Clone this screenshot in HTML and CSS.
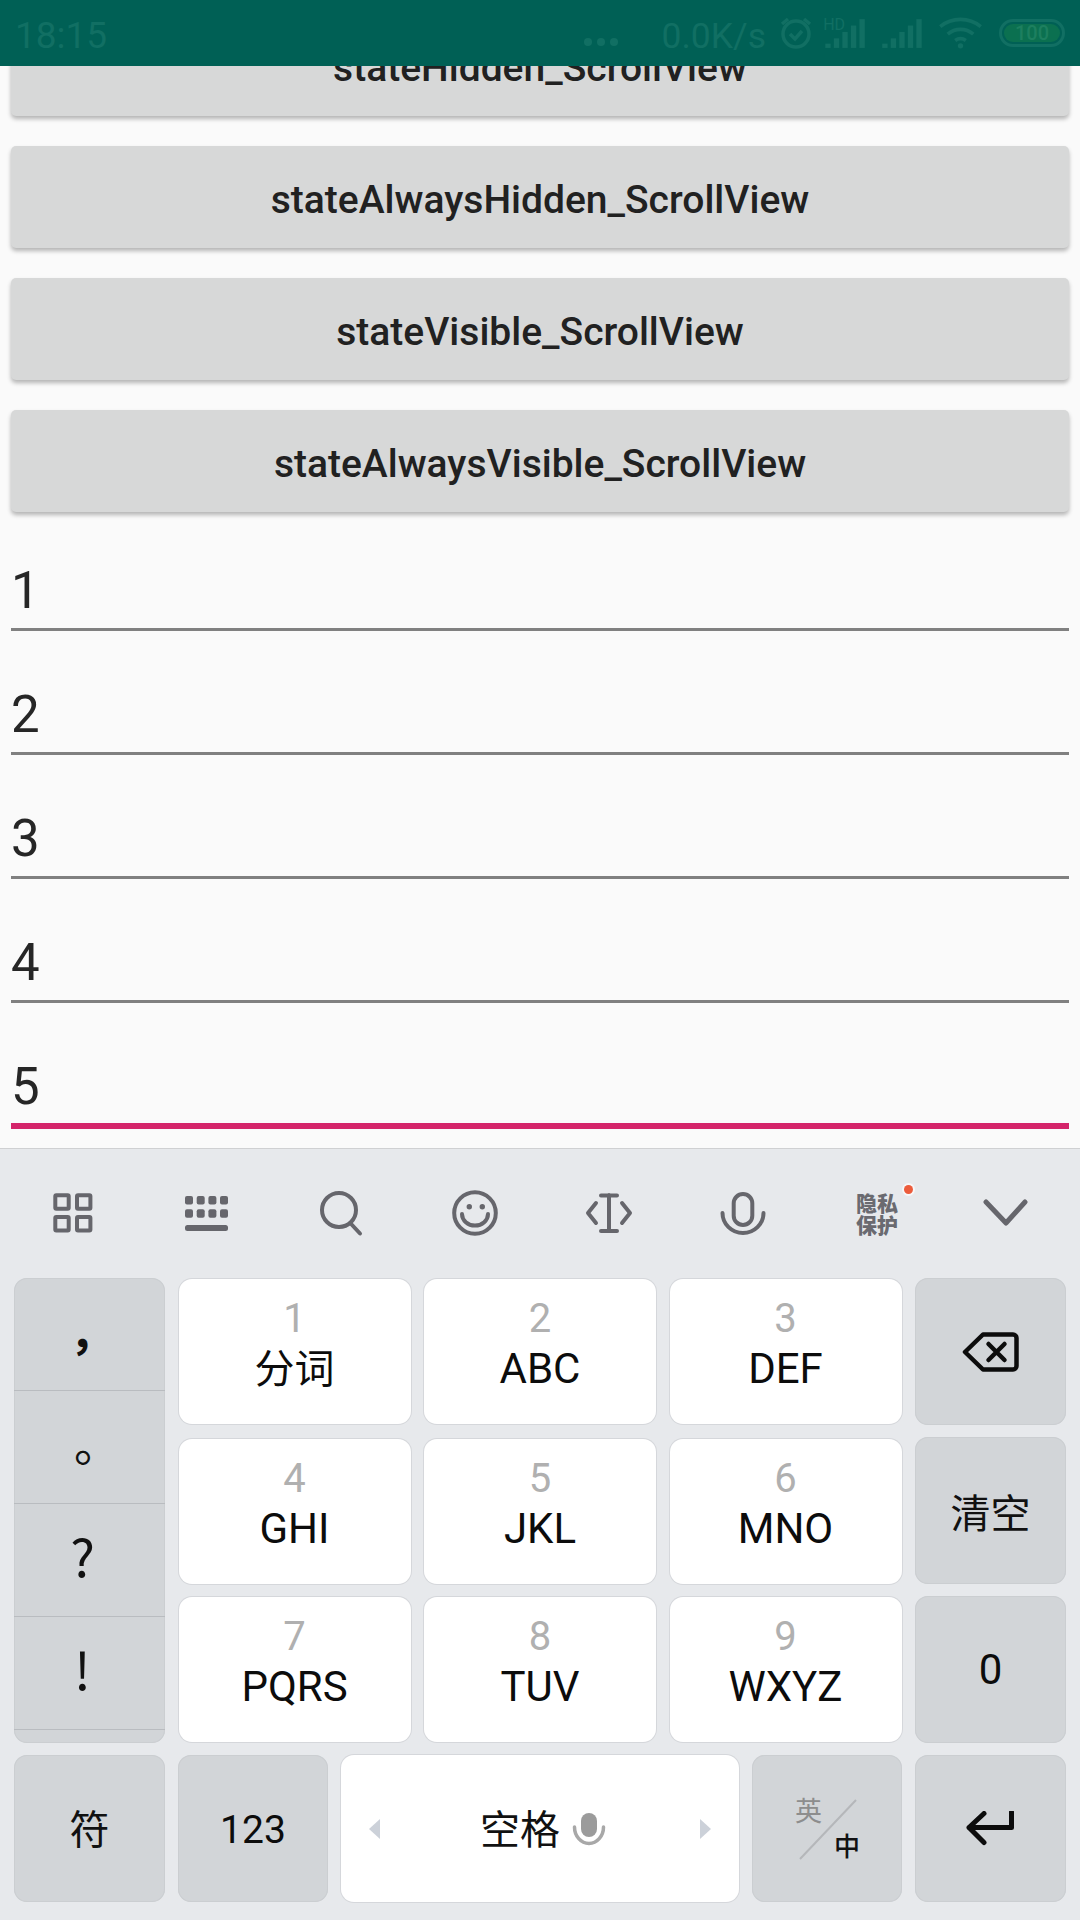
FILE: index.html
```html
<!DOCTYPE html>
<html lang="zh">
<head>
<meta charset="utf-8">
<title>Soft input demo</title>
<link rel="stylesheet" href="styles.css">
</head>
<body>
<div class="screen">
  <div class="statusbar">
    <span class="time">18:15</span>
    <div class="status-right">
      <svg class="st-dots" width="36" height="10" viewBox="0 0 36 10"><circle cx="5" cy="5" r="4"/><circle cx="18" cy="5" r="4"/><circle cx="31" cy="5" r="4"/></svg>
      <span class="speed">0.0K/s</span>
      <svg class="st-stroke st-alarm" width="34" height="34" viewBox="0 0 34 34"><circle cx="17" cy="18" r="13"/><path d="M11 18l5 5 7-8M3 8l6-5M31 8l-6-5"/></svg>
      <svg class="st-fill" width="43" height="32" viewBox="0 0 40 30"><text x="0" y="12" class="st-hd">HD</text><rect x="2" y="25" width="5" height="4"/><rect x="10" y="20" width="5" height="9"/><rect x="18" y="14" width="5" height="15"/><rect x="26" y="8" width="5" height="21"/><rect x="34" y="2" width="5" height="27"/></svg>
      <svg class="st-fill" width="43" height="32" viewBox="0 0 40 30"><rect x="1" y="25" width="5" height="4"/><rect x="9" y="20" width="5" height="9"/><rect x="17" y="14" width="5" height="15"/><rect x="25" y="8" width="5" height="21"/><rect x="33" y="2" width="5" height="27"/></svg>
      <svg class="st-stroke" width="43" height="32" viewBox="0 0 40 30"><path d="M1 9c11-9 27-9 38 0M8 16c7-6 17-6 24 0M15 22c3-2 7-2 10 0"/><circle cx="20" cy="27" r="2.5" class="st-dotfill"/></svg>
      <div class="battery"><span class="battery-level">100</span></div>
    </div>
  </div>

  <main class="content">
    <div class="buttons">
      <button class="btn">stateHidden_ScrollView</button>
      <button class="btn">stateAlwaysHidden_ScrollView</button>
      <button class="btn">stateVisible_ScrollView</button>
      <button class="btn">stateAlwaysVisible_ScrollView</button>
    </div>
    <div class="fields">
      <div class="field">1</div>
      <div class="field">2</div>
      <div class="field">3</div>
      <div class="field">4</div>
      <div class="field field-active">5</div>
    </div>
  </main>

  <section class="keyboard">
    <div class="toolbar">
      <div class="tool"><svg class="ico" width="60" height="60" viewBox="0 0 60 60"><rect x="12.3" y="12.3" width="13.4" height="13.4" rx="1"/><rect x="34" y="12.3" width="13.4" height="13.4" rx="1"/><rect x="12.3" y="34" width="13.4" height="13.4" rx="1"/><rect x="34" y="34" width="13.4" height="13.4" rx="1"/></svg></div>
      <div class="tool"><svg class="ico-fill" width="60" height="60" viewBox="0 0 60 60"><rect x="8" y="13" width="8" height="8.5" rx="2"/><rect x="19.7" y="13" width="8" height="8.5" rx="2"/><rect x="31.4" y="13" width="8" height="8.5" rx="2"/><rect x="43" y="13" width="8" height="8.5" rx="2"/><rect x="8" y="26.3" width="8" height="8.5" rx="2"/><rect x="19.7" y="26.3" width="8" height="8.5" rx="2"/><rect x="31.4" y="26.3" width="8" height="8.5" rx="2"/><rect x="43" y="26.3" width="8" height="8.5" rx="2"/><rect x="8" y="42" width="43" height="6" rx="2.5"/></svg></div>
      <div class="tool"><svg class="ico" width="60" height="60" viewBox="0 0 60 60"><circle cx="28" cy="27" r="17"/><path d="M39.7 40.5L49 50.5"/></svg></div>
      <div class="tool"><svg class="ico" width="60" height="60" viewBox="0 0 60 60"><circle cx="30" cy="30" r="20.8"/><path d="M17 31a13 11.5 0 0 0 26 0"/><circle class="ico-dot" cx="24.3" cy="23.7" r="2.7"/><circle class="ico-dot" cx="37.3" cy="23.7" r="2.7"/></svg></div>
      <div class="tool"><svg class="ico" width="60" height="60" viewBox="0 0 60 60"><path d="M30 12v36M22 12.5h16M22 48h16"/><path d="M17 20l-8 10 8 10M43 20l8 10-8 10"/></svg></div>
      <div class="tool"><svg class="ico" width="60" height="60" viewBox="0 0 60 60"><rect x="20.7" y="11" width="18.6" height="31" rx="9.3"/><path d="M9.5 30a20.5 20 0 0 0 41 0"/></svg></div>
      <div class="tool"><span class="privacy">隐私<br>保护</span><span class="badge"></span></div>
      <div class="tool"><svg class="ico ico-chev" width="60" height="60" viewBox="0 0 60 60"><path d="M5 19l20 21 19-21"/></svg></div>
    </div>

    <div class="keypad">
      <div class="punct">
        <div class="slot"><span class="p-comma">，</span></div>
        <div class="slot"><span class="p-stop">。</span></div>
        <div class="slot"><span class="p-big">?</span></div>
        <div class="slot"><span class="p-big">!</span></div>
      </div>

      <div class="key white"><span class="num">1</span><span class="lab cjk">分词</span></div>
      <div class="key white"><span class="num">2</span><span class="lab">ABC</span></div>
      <div class="key white"><span class="num">3</span><span class="lab">DEF</span></div>
      <div class="key gray center">
        <svg class="ink ink-back" width="60" height="44" viewBox="0 0 60 44"><path d="M4 22L22 4.500h30a3.500 3.500 0 0 1 3.500 3.500v28a3.500 3.500 0 0 1-3.500 3.500H22z"/><path d="M27.500 14l16 16M43.500 14l-16 16"/></svg>
      </div>

      <div class="key white r2"><span class="num">4</span><span class="lab">GHI</span></div>
      <div class="key white r2"><span class="num">5</span><span class="lab">JKL</span></div>
      <div class="key white r2"><span class="num">6</span><span class="lab">MNO</span></div>
      <div class="key gray center cjk-big">清空</div>

      <div class="key white"><span class="num">7</span><span class="lab">PQRS</span></div>
      <div class="key white"><span class="num">8</span><span class="lab">TUV</span></div>
      <div class="key white"><span class="num">9</span><span class="lab">WXYZ</span></div>
      <div class="key gray center latin-big">0</div>

      <div class="bottom-row">
        <div class="key gray center cjk-big raise w151">符</div>
        <div class="key gray center latin-mid w150">123</div>
        <div class="key white space">
          <span class="tri tri-l"></span>
          <span class="space-mid">
            <span class="cjk-big raise">空格</span>
            <svg class="mic-mini" width="34" height="34" viewBox="0 0 34 34"><rect class="mic-cap" x="9" y="1" width="16" height="24" rx="8"/><path d="M2.500 15a14.500 16.500 0 0 0 29 0"/></svg>
          </span>
          <span class="tri tri-r"></span>
        </div>
        <div class="key gray lang w150">
          <span class="lang-en">英</span><span></span>
          <span></span><span class="lang-zh">中</span>
          <svg class="lang-slash" width="60" height="62" viewBox="0 0 60 62"><path d="M58 1L2 60"/></svg>
        </div>
        <div class="key gray center w151">
          <svg class="ink" width="52" height="36" viewBox="0 0 52 36"><path d="M46.500 1v15.500H4M19 2.500L4 16.500l15 15"/></svg>
        </div>
      </div>
    </div>
  </section>
</div>
</body>
</html>
```

FILE: styles.css
```css
* { box-sizing: border-box; }

html, body {
  margin: 0;
  padding: 0;
  background: #fafafa;
}

body {
  font-family: Roboto, "Noto Sans CJK SC", sans-serif;
}

.screen {
  position: relative;
  width: 1080px;
  height: 1920px;
  overflow: hidden;
  display: flex;
  flex-direction: column;
  background: #fafafa;
}

/* status bar lies over the scrolled content */
.statusbar {
  position: absolute;
  top: 0;
  left: 0;
  width: 1080px;
  height: 66px;
  background: #006055;
  display: flex;
  align-items: center;
  justify-content: space-between;
  padding: 0 15px;
  z-index: 2;
}

.time {
  font-size: 37px;
  line-height: 44px;
  padding-top: 5px;
  color: #116f63;
}

.status-right {
  display: flex;
  align-items: center;
}

.status-right svg { flex: none; }

.speed {
  font-size: 35.5px;
  line-height: 40px;
  padding-top: 5px;
  color: #116f63;
  margin: 0 13px 0 42px;
}

.st-dots { fill: #116f63; margin-top: 18px; }
.st-stroke { fill: none; stroke: #116f63; stroke-width: 3.500; margin-right: 15px; }
.st-stroke circle.st-dotfill { fill: #116f63; stroke: none; }
.st-alarm { margin-right: 10px; }
.st-fill { fill: #116f63; margin-right: 15px; }
.st-hd { font-family: Roboto, sans-serif; font-size: 15px; }

.battery {
  width: 66px;
  height: 28px;
  border: 3px solid #116f63;
  border-radius: 14px;
  display: flex;
  align-items: center;
  padding: 2px;
  margin-left: 2px;
}

.battery-level {
  flex: 1;
  height: 18px;
  border-radius: 9px;
  background: #0b7050;
  color: #1d7f5f;
  font-size: 20px;
  line-height: 18px;
  text-align: center;
  font-weight: 500;
}

/* app content */
.content {
  height: 1148px;
  flex: none;
  padding: 14px 11px 0;
  background: #fafafa;
}

.buttons {
  display: flex;
  flex-direction: column;
  gap: 30px;
}

.btn {
  display: block;
  width: 100%;
  height: 102px;
  padding: 6px 0 0;
  border: 0;
  border-radius: 5px;
  background: #d7d8d8;
  box-shadow: 0 3px 4px rgba(0, 0, 0, 0.28);
  color: #212121;
  font-family: Roboto, sans-serif;
  font-weight: 500;
  font-size: 39px;
  line-height: 96px;
  text-align: center;
}

.fields {
  display: flex;
  flex-direction: column;
  gap: 30px;
  margin-top: 25px;
}

.field {
  height: 94px;
  display: flex;
  align-items: flex-end;
  padding-bottom: 7px;
  border-bottom: 3px solid #808080;
  color: #262626;
  font-size: 51px;
  line-height: 60px;
}

.field-active {
  height: 96px;
  padding-bottom: 6px;
  border-bottom: 6px solid #d4246a;
}

/* keyboard */
.keyboard {
  flex: 1;
  background: #e7e9ec;
  border-top: 1px solid #cfd0d2;
}

.toolbar {
  display: flex;
  height: 128px;
  padding-left: 6px;
}

.tool {
  width: 134px;
  flex: none;
  display: flex;
  align-items: center;
  justify-content: center;
  position: relative;
}

.ico {
  fill: none;
  stroke: #66666c;
  stroke-width: 4;
  stroke-linecap: round;
  stroke-linejoin: round;
}

.ico-chev { stroke-width: 5; }
.ico .ico-dot { fill: #66666c; stroke: none; }
.ico-fill { fill: #66666c; }

.privacy {
  font-family: "Noto Sans CJK SC", sans-serif;
  font-weight: 900;
  font-size: 21px;
  line-height: 22px;
  color: #6a6a70;
  display: block;
}

.badge {
  position: absolute;
  left: 94px;
  top: 36px;
  width: 9px;
  height: 9px;
  border-radius: 50%;
  background: #ec5c3c;
  box-shadow: 0 0 0 2px #f7f7f8;
}

.keypad {
  margin-top: 1px;
  padding-left: 14px;
  display: grid;
  grid-template-columns: 151px 232px 232px 232px 151px;
  grid-template-rows: repeat(4, 147px);
  column-gap: 13.5px;
  row-gap: 12px;
}

.key {
  border-radius: 13px;
  color: #0c0c0c;
}

.white {
  background: #fff;
  margin: 1px 0;
  box-shadow: 0 0 0 1px #d5d7db;
  display: flex;
  flex-direction: column;
  align-items: center;
  padding-top: 20px;
  gap: 5px;
}

.r2 { margin: 2px 0 0; }

.gray {
  background: #d2d5d8;
  box-shadow: inset 0 0 0 1px #cbced1;
}

.center {
  display: flex;
  align-items: center;
  justify-content: center;
}

.num {
  display: block;
  font-size: 40px;
  line-height: 40px;
  color: #b0b0b0;
}

.lab {
  display: block;
  font-size: 42px;
  line-height: 50px;
}

.lab.cjk {
  font-family: "Noto Sans CJK SC", sans-serif;
  font-size: 40px;
  line-height: 44px;
}

.cjk-big {
  font-family: "Noto Sans CJK SC", sans-serif;
  font-size: 40px;
  color: #111;
}

.raise { padding-bottom: 3px; }

.latin-big { font-size: 42px; }
.latin-mid { font-size: 39px; padding-top: 2px; }

.ink {
  fill: none;
  stroke: #0c0c0c;
  stroke-width: 5;
  stroke-linejoin: round;
  stroke-linecap: round;
}

.ink-back { stroke-width: 4.500; }

/* punctuation column */
.punct {
  grid-column: 1;
  grid-row: 1 / span 3;
  background: #d2d5d8;
  border-radius: 13px;
  overflow: hidden;
  padding-bottom: 14px;
  display: flex;
  flex-direction: column;
  box-shadow: inset 0 0 0 1px #cbced1;
}

.slot {
  height: 113px;
  flex: none;
  border-bottom: 1px solid #b9bcc0;
  display: flex;
  align-items: center;
  justify-content: center;
  color: #111;
}

.p-comma, .p-stop {
  font-family: "Noto Sans CJK SC", sans-serif;
  font-size: 46px;
  line-height: 50px;
}

.p-comma { padding: 0 0 10px 6px; font-weight: 700; }
.p-stop { padding: 0 0 12px 15px; }

.p-big {
  font-family: "Noto Sans CJK SC", sans-serif;
  font-size: 52px;
  line-height: 60px;
  padding: 0 14px 11px 0;
}

.bottom-row {
  grid-column: 1 / -1;
  display: flex;
  gap: 13px;
}

.w151 { width: 151px; flex: none; }
.w150 { width: 150px; flex: none; }

.space {
  width: 398px;
  flex: none;
  margin: 0;
  padding: 0 28px;
  flex-direction: row;
  justify-content: space-between;
  align-items: center;
  gap: 0;
}

.space-mid {
  display: flex;
  align-items: center;
  gap: 12px;
  margin-left: 6px;
}

.tri {
  width: 0;
  height: 0;
  border-top: 10px solid transparent;
  border-bottom: 10px solid transparent;
}

.tri-l { border-right: 11px solid #ccd1d9; }
.tri-r { border-left: 11px solid #ccd1d9; }

.mic-mini {
  fill: none;
  stroke: #a8a8a8;
  stroke-width: 3.500;
  stroke-linecap: round;
}

.mic-mini .mic-cap { fill: #9b9b9b; stroke: none; }

.lang {
  position: relative;
  display: grid;
  grid-template-columns: 39px 1fr;
  grid-template-rows: 36px 34px;
  padding: 37px 0 0 43px;
  font-family: "Noto Sans CJK SC", sans-serif;
}

.lang-en {
  font-size: 27px;
  line-height: 36px;
  color: #8d8d8d;
}

.lang-zh {
  font-size: 26px;
  line-height: 34px;
  font-weight: 500;
  color: #111;
}

.lang-slash {
  position: absolute;
  left: 46px;
  top: 44px;
  fill: none;
  stroke: #b5b7ba;
  stroke-width: 2;
}
```
